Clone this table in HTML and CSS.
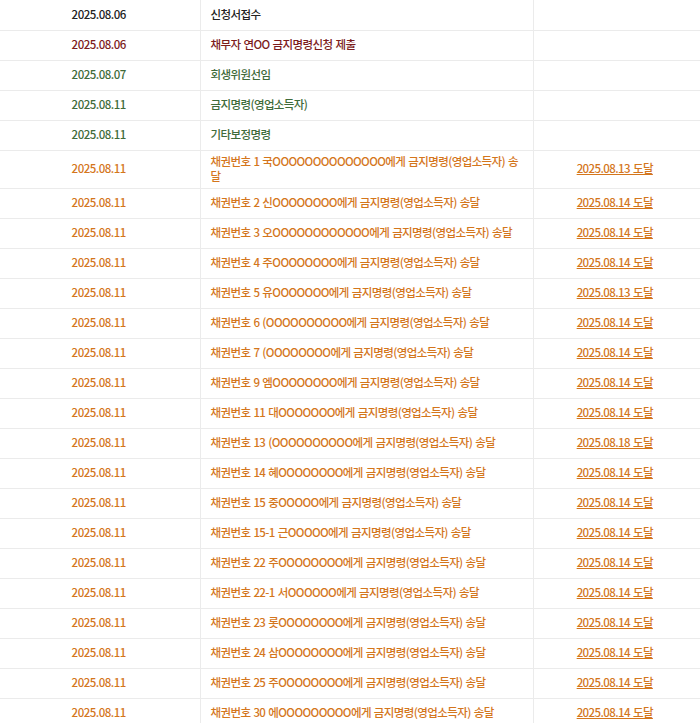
FILE: index.html
```html
<!DOCTYPE html>
<html>
<head>
  <meta charset="utf-8">
  <title>진행내역</title>
  <link rel="stylesheet" href="styles.css">
</head>
<body>

  <table class="history">
    <colgroup>
      <col class="col-date">
      <col class="col-content">
      <col class="col-result">
    </colgroup>
    <tbody>
      <tr class="st-basic">
        <td class="date">2025.08.06</td>
        <td class="content">신청서접수</td>
        <td class="result"></td>
      </tr>
      <tr class="st-submit">
        <td class="date">2025.08.06</td>
        <td class="content">채무자 연OO 금지명령신청 제출</td>
        <td class="result"></td>
      </tr>
      <tr class="st-court">
        <td class="date">2025.08.07</td>
        <td class="content">회생위원선임</td>
        <td class="result"></td>
      </tr>
      <tr class="st-court">
        <td class="date">2025.08.11</td>
        <td class="content">금지명령(영업소득자)</td>
        <td class="result"></td>
      </tr>
      <tr class="st-court">
        <td class="date">2025.08.11</td>
        <td class="content">기타보정명령</td>
        <td class="result"></td>
      </tr>
      <tr class="st-send">
        <td class="date">2025.08.11</td>
        <td class="content">채권번호 1 국OOOOOOOOOOOOOO에게 금지명령(영업소득자) 송달</td>
        <td class="result"><a href="#">2025.08.13 도달</a></td>
      </tr>
      <tr class="st-send">
        <td class="date">2025.08.11</td>
        <td class="content">채권번호 2 신OOOOOOOO에게 금지명령(영업소득자) 송달</td>
        <td class="result"><a href="#">2025.08.14 도달</a></td>
      </tr>
      <tr class="st-send">
        <td class="date">2025.08.11</td>
        <td class="content">채권번호 3 오OOOOOOOOOOOO에게 금지명령(영업소득자) 송달</td>
        <td class="result"><a href="#">2025.08.14 도달</a></td>
      </tr>
      <tr class="st-send">
        <td class="date">2025.08.11</td>
        <td class="content">채권번호 4 주OOOOOOOO에게 금지명령(영업소득자) 송달</td>
        <td class="result"><a href="#">2025.08.14 도달</a></td>
      </tr>
      <tr class="st-send">
        <td class="date">2025.08.11</td>
        <td class="content">채권번호 5 유OOOOOOO에게 금지명령(영업소득자) 송달</td>
        <td class="result"><a href="#">2025.08.13 도달</a></td>
      </tr>
      <tr class="st-send">
        <td class="date">2025.08.11</td>
        <td class="content">채권번호 6 (OOOOOOOOOO에게 금지명령(영업소득자) 송달</td>
        <td class="result"><a href="#">2025.08.14 도달</a></td>
      </tr>
      <tr class="st-send">
        <td class="date">2025.08.11</td>
        <td class="content">채권번호 7 (OOOOOOOO에게 금지명령(영업소득자) 송달</td>
        <td class="result"><a href="#">2025.08.14 도달</a></td>
      </tr>
      <tr class="st-send">
        <td class="date">2025.08.11</td>
        <td class="content">채권번호 9 엠OOOOOOOO에게 금지명령(영업소득자) 송달</td>
        <td class="result"><a href="#">2025.08.14 도달</a></td>
      </tr>
      <tr class="st-send">
        <td class="date">2025.08.11</td>
        <td class="content">채권번호 11 대OOOOOOO에게 금지명령(영업소득자) 송달</td>
        <td class="result"><a href="#">2025.08.14 도달</a></td>
      </tr>
      <tr class="st-send">
        <td class="date">2025.08.11</td>
        <td class="content">채권번호 13 (OOOOOOOOOO에게 금지명령(영업소득자) 송달</td>
        <td class="result"><a href="#">2025.08.18 도달</a></td>
      </tr>
      <tr class="st-send">
        <td class="date">2025.08.11</td>
        <td class="content">채권번호 14 혜OOOOOOOO에게 금지명령(영업소득자) 송달</td>
        <td class="result"><a href="#">2025.08.14 도달</a></td>
      </tr>
      <tr class="st-send">
        <td class="date">2025.08.11</td>
        <td class="content">채권번호 15 중OOOOO에게 금지명령(영업소득자) 송달</td>
        <td class="result"><a href="#">2025.08.14 도달</a></td>
      </tr>
      <tr class="st-send">
        <td class="date">2025.08.11</td>
        <td class="content">채권번호 15-1 근OOOOO에게 금지명령(영업소득자) 송달</td>
        <td class="result"><a href="#">2025.08.14 도달</a></td>
      </tr>
      <tr class="st-send">
        <td class="date">2025.08.11</td>
        <td class="content">채권번호 22 주OOOOOOOO에게 금지명령(영업소득자) 송달</td>
        <td class="result"><a href="#">2025.08.14 도달</a></td>
      </tr>
      <tr class="st-send">
        <td class="date">2025.08.11</td>
        <td class="content">채권번호 22-1 서OOOOOO에게 금지명령(영업소득자) 송달</td>
        <td class="result"><a href="#">2025.08.14 도달</a></td>
      </tr>
      <tr class="st-send">
        <td class="date">2025.08.11</td>
        <td class="content">채권번호 23 롯OOOOOOOO에게 금지명령(영업소득자) 송달</td>
        <td class="result"><a href="#">2025.08.14 도달</a></td>
      </tr>
      <tr class="st-send">
        <td class="date">2025.08.11</td>
        <td class="content">채권번호 24 삼OOOOOOOO에게 금지명령(영업소득자) 송달</td>
        <td class="result"><a href="#">2025.08.14 도달</a></td>
      </tr>
      <tr class="st-send">
        <td class="date">2025.08.11</td>
        <td class="content">채권번호 25 주OOOOOOOO에게 금지명령(영업소득자) 송달</td>
        <td class="result"><a href="#">2025.08.14 도달</a></td>
      </tr>
      <tr class="st-send">
        <td class="date">2025.08.11</td>
        <td class="content">채권번호 30 에OOOOOOOOO에게 금지명령(영업소득자) 송달</td>
        <td class="result"><a href="#">2025.08.14 도달</a></td>
      </tr>
    </tbody>
  </table>

</body>
</html>
```

FILE: styles.css
```css
body {
  margin: 0;
  font: 500 11.5px/15px "Noto Sans CJK KR", "Noto Sans", sans-serif;
  color: #222;
  background: #fff;
}

.history {
  width: 700px;
  border-collapse: collapse;
  table-layout: fixed;
}

.history .col-date {
  width: 200px;
}

.history .col-result {
  width: 167px;
}

.history tr {
  height: 30px;
}

.history td {
  padding: 3px 10px 4px;
  border-bottom: 1px solid #ebebeb;
  border-right: 1px solid #ebebeb;
  vertical-align: middle;
  letter-spacing: -0.6px;
  word-spacing: 1px;
}

.history td:last-child {
  border-right: 0;
}

.history .date,
.history .result {
  text-align: center;
}

.history .date {
  padding-right: 12px;
  letter-spacing: -0.5px;
}

.history .result {
  padding-right: 14px;
}

.history .result a {
  color: inherit;
  text-decoration: underline;
}

.st-basic {
  color: #222;
}

.st-submit {
  color: #7c1c1c;
}

.st-court {
  color: #3f6b3a;
}

.st-send {
  color: #d4761c;
}
```
